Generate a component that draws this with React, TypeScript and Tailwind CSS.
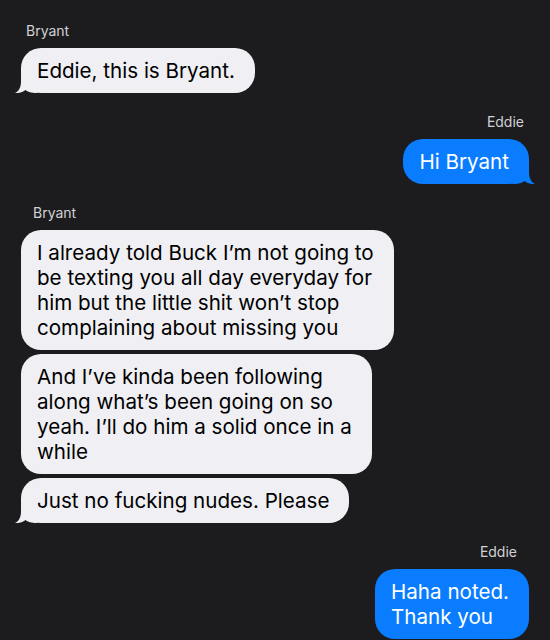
const FONT = { fontFamily: 'Inter, "Noto Sans", sans-serif' };

type Msg = { from: 'Bryant' | 'Eddie'; lines: string[]; tail?: boolean };

const GROUPS: { from: 'Bryant' | 'Eddie'; labelPad: string; msgs: Msg[] }[] = [
  {
    from: 'Bryant',
    labelPad: 'pl-[5px]',
    msgs: [{ from: 'Bryant', lines: ['Eddie, this is Bryant.'], tail: true }],
  },
  {
    from: 'Eddie',
    labelPad: 'pr-[5px]',
    msgs: [{ from: 'Eddie', lines: ['Hi Bryant'], tail: true }],
  },
  {
    from: 'Bryant',
    labelPad: 'pl-[12px]',
    msgs: [
      {
        from: 'Bryant',
        lines: [
          'I already told Buck I’m not going to',
          'be texting you all day everyday for',
          'him but the little shit won’t stop',
          'complaining about missing you',
        ],
      },
      {
        from: 'Bryant',
        lines: [
          'And I’ve kinda been following',
          'along what’s been going on so',
          'yeah. I’ll do him a solid once in a',
          'while',
        ],
      },
      { from: 'Bryant', lines: ['Just no fucking nudes. Please'], tail: true },
    ],
  },
  {
    from: 'Eddie',
    labelPad: 'pr-[12px]',
    msgs: [{ from: 'Eddie', lines: ['Haha noted.', 'Thank you'] }],
  },
];

function Tail({ side, color }: { side: 'left' | 'right'; color: string }) {
  return (
    <svg
      width="22"
      height="20"
      viewBox="0 0 22 20"
      className={
        side === 'left'
          ? 'absolute bottom-0 left-[-6px]'
          : 'absolute bottom-0 right-[-6px] -scale-x-100'
      }
    >
      <path
        d="M6 0 L6 8 C6 14 4 18 0 20 C4 20.5 8 19 10.5 17 C13 19 16 20 22 20 L22 0 Z"
        fill={color}
      />
    </svg>
  );
}

function Bubble({ msg }: { msg: Msg }) {
  const mine = msg.from === 'Eddie';
  return (
    <div
      className={`relative w-fit rounded-[20px] py-[10px] pl-4 pr-5 text-[20.6px] leading-[25px] ${
        mine ? 'self-end bg-[#0a7cff] text-white' : 'self-start bg-[#efeff4] text-black'
      }`}
    >
      {msg.tail && <Tail side={mine ? 'right' : 'left'} color={mine ? '#0a7cff' : '#efeff4'} />}
      <div className="relative">
        {msg.lines.map((l) => (
          <div key={l} className="whitespace-nowrap">
            {l}
          </div>
        ))}
      </div>
    </div>
  );
}

export default function App() {
  return (
    <div className="h-[640px] w-[550px] overflow-hidden bg-[#1c1c1e] px-[21px] pt-[22px]" style={FONT}>
      <div className="flex flex-col">
        {GROUPS.map((g, i) => (
          <div key={i} className={`flex flex-col ${i > 0 ? 'mt-[20px]' : ''}`}>
            <p
              className={`mb-[8px] text-[14px] leading-[18px] text-[#d1d1d6] ${
                g.from === 'Eddie' ? `self-end ${g.labelPad}` : `self-start ${g.labelPad}`
              }`}
            >
              {g.from}
            </p>
            <div className="flex flex-col gap-[4px]">
              {g.msgs.map((m, j) => (
                <Bubble key={j} msg={m} />
              ))}
            </div>
          </div>
        ))}
      </div>
    </div>
  );
}
